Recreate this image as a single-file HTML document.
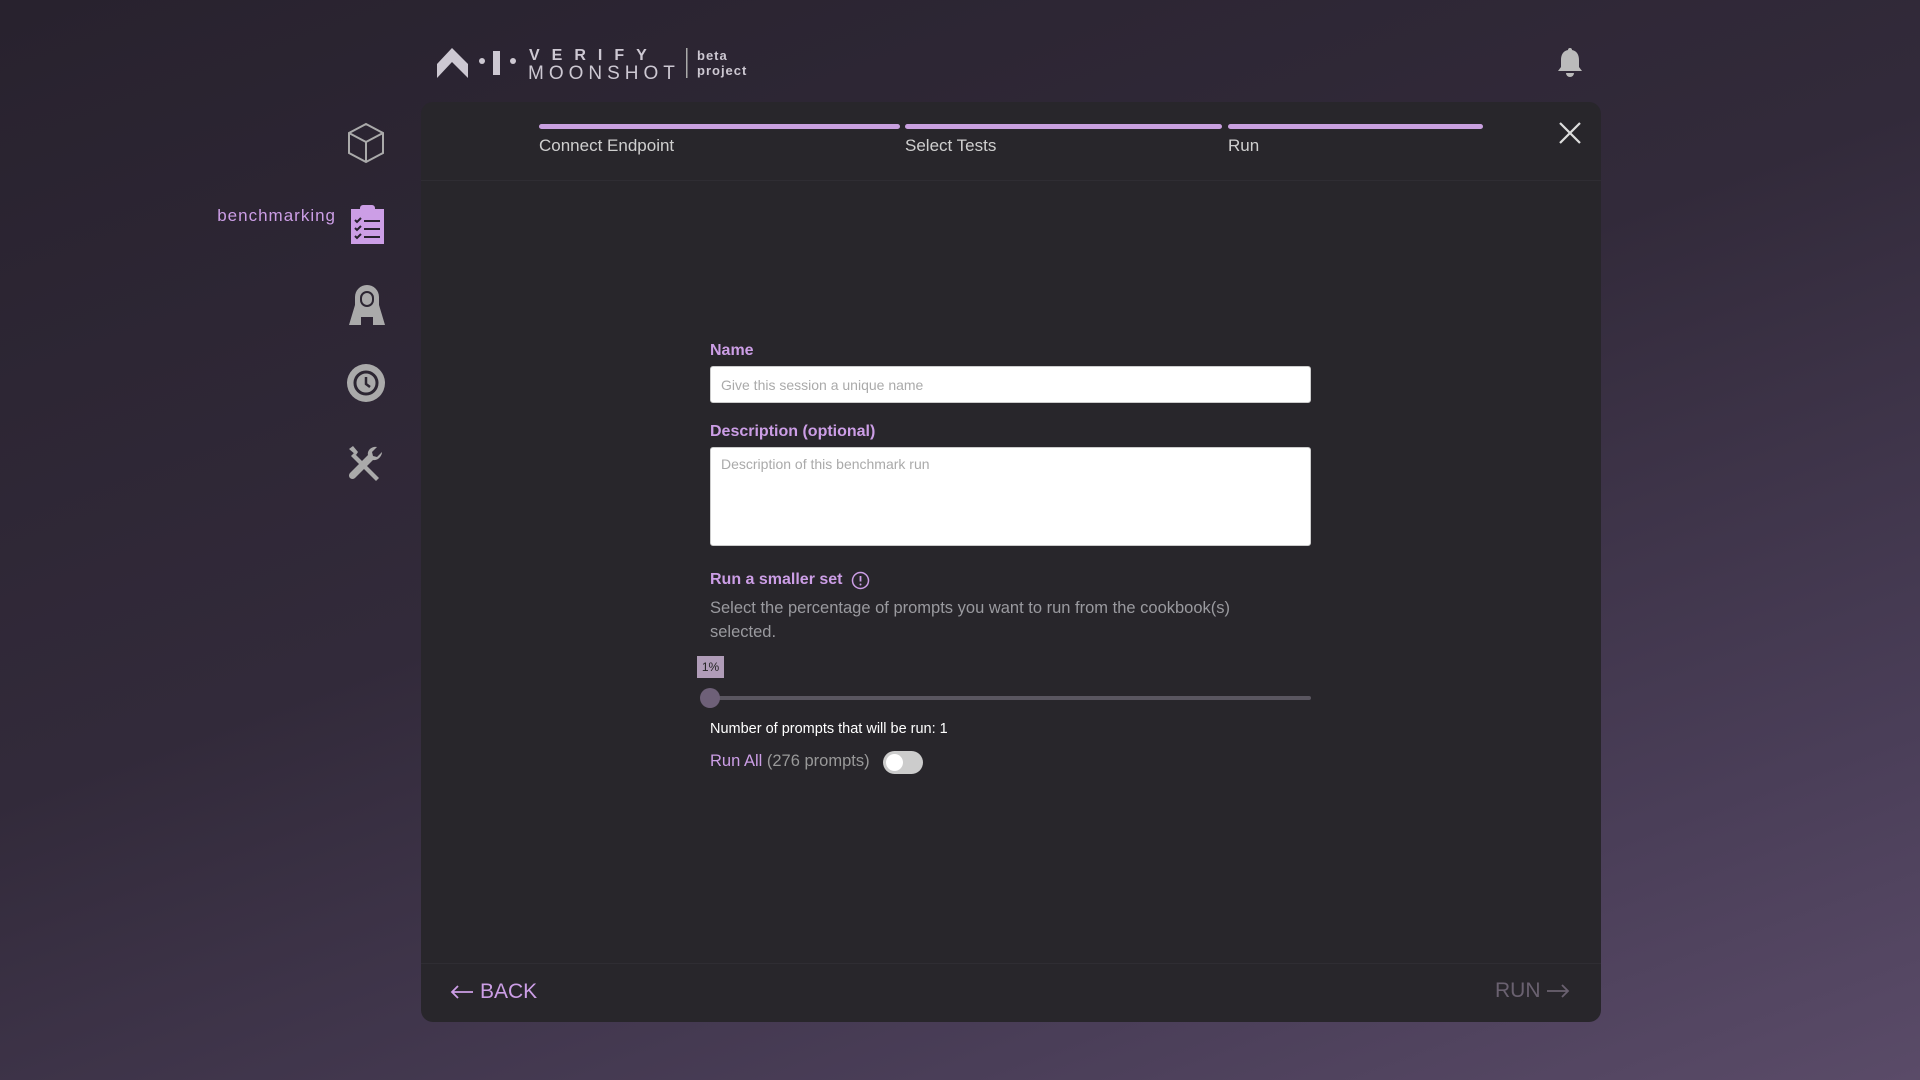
<!DOCTYPE html>
<html><head><meta charset="utf-8"><style>
*{margin:0;padding:0;box-sizing:border-box}
body{width:1920px;height:1080px;overflow:hidden;font-family:"Liberation Sans",sans-serif;background:linear-gradient(160deg,#28222e 0%,#322a3a 45%,#4a3e58 80%,#5a4b68 100%);position:relative;color:#ccc}
.abs{position:absolute}
.panel{left:421px;top:102px;width:1180px;height:920px;background:#28262b;border-radius:12px}
.bar{top:124px;height:5px;background:#c9a0e0;border-radius:3px}
.step{top:136px;font-size:17px;color:#cfcfcf}
.lbl{font-size:16px;font-weight:bold;color:#cc9ee6}
.inp{background:#fff;border:1px solid #ccc;border-radius:3px;font-size:14px;color:#aaa;padding:10px}
</style></head><body>
<!-- logo -->
<svg class="abs" style="left:436px;top:44px" width="320" height="36" viewBox="0 0 320 36">
<path d="M1 34 L1 20 L16 4 L32 20 L32 34 L16 18 Z" fill="#cdc8d2"/>
<circle cx="46" cy="17" r="3" fill="#cdc8d2"/>
<rect x="57" y="7" width="7" height="24" fill="#cdc8d2"/>
<circle cx="77" cy="17" r="3" fill="#cdc8d2"/>
<text x="93" y="16" font-family="Liberation Sans" font-weight="bold" font-size="16" letter-spacing="12" fill="#cdc8d2">VERIFY</text>
<text x="92" y="35" font-family="Liberation Sans" font-size="19" letter-spacing="5" fill="#cdc8d2">MOONSHOT</text>
<rect x="250" y="4" width="1.5" height="30" fill="#aaa"/>
<text x="261" y="16" font-family="Liberation Sans" font-weight="bold" font-size="13" letter-spacing="1" fill="#cdc8d2">beta</text>
<text x="261" y="31" font-family="Liberation Sans" font-weight="bold" font-size="13" letter-spacing="1" fill="#cdc8d2">project</text>
</svg>
<!-- bell -->
<svg class="abs" style="left:1556px;top:46px" width="28" height="32" viewBox="0 0 28 32"><path d="M14 2c-1.5 0-2 1-2 2C7 5 5 9 5 14v7l-3 4h24l-3-4v-7c0-5-2-9-7-10 0-1-.5-2-2-2z" fill="#bbb"/><path d="M10 27a4 4 0 0 0 8 0z" fill="#bbb"/></svg>
<!-- sidebar -->
<svg class="abs" style="left:346px;top:122px" width="40" height="42" viewBox="0 0 40 42" fill="none" stroke="#aaa" stroke-width="2"><path d="M20 2 L37 11 L37 31 L20 40 L3 31 L3 11 Z M3 11 L20 20 L37 11 M20 20 L20 40"/></svg>
<div class="abs" style="right:1584px;top:206px;font-size:17px;color:#cc9ee6;letter-spacing:1px">benchmarking</div>
<svg class="abs" style="left:350px;top:204px" width="35" height="40" viewBox="0 0 35 40"><rect x="1" y="5" width="33" height="35" fill="#cc9ee6"/><rect x="10" y="1" width="15" height="8" rx="3" fill="#cc9ee6"/><g stroke="#28222e" stroke-width="2" fill="none"><path d="M5 16l2 2 4-4M5 24l2 2 4-4M5 32l2 2 4-4M14 17h16M14 25h16M14 33h16"/></g></svg>
<svg class="abs" style="left:347px;top:284px" width="40" height="42" viewBox="0 0 40 42"><path d="M20 1a12 12 0 0 0-12 12v8L2 41h12v-8h12v8h12l-6-20v-8A12 12 0 0 0 20 1z" fill="#aaa"/><path d="M14 14a6 6 0 0 1 12 0v2a6 6 0 0 1-12 0z" fill="none" stroke="#2c2632" stroke-width="2"/></svg>
<svg class="abs" style="left:346px;top:363px" width="40" height="40" viewBox="0 0 40 40"><circle cx="20" cy="20" r="19" fill="#aaa"/><circle cx="20" cy="20" r="11" fill="none" stroke="#2c2632" stroke-width="3"/><path d="M20 14v7l4 3" stroke="#2c2632" stroke-width="2.5" fill="none"/></svg>
<svg class="abs" style="left:346px;top:444px" width="40" height="40" viewBox="0 0 40 40" fill="#aaa"><path d="M3 5l4-3 5 6 -2 3z"/><path d="M8 9l25 25-3 3L5 12z"/><path d="M36 8l-5 5-4-1-1-4 5-5c-5-1-10 3-9 8L4 29a3 3 0 0 0 5 5l18-18c5 1 9-4 9-8z"/></svg>
<!-- panel -->
<div class="abs panel"></div>
<div class="abs" style="left:421px;top:180px;width:1180px;height:1px;background:#2f2d33"></div>
<div class="abs bar" style="left:539px;width:361px"></div>
<div class="abs bar" style="left:905px;width:317px"></div>
<div class="abs bar" style="left:1228px;width:255px"></div>
<div class="abs step" style="left:539px">Connect Endpoint</div>
<div class="abs step" style="left:905px">Select Tests</div>
<div class="abs step" style="left:1228px">Run</div>
<svg class="abs" style="left:1559px;top:122px" width="22" height="22" viewBox="0 0 22 22" stroke="#ddd" stroke-width="2.2"><path d="M1 1L21 21M21 1L1 21"/></svg>
<!-- form -->
<div class="abs lbl" style="left:710px;top:342px">Name</div>
<div class="abs inp" style="left:710px;top:366px;width:601px;height:37px">Give this session a unique name</div>
<div class="abs lbl" style="left:710px;top:423px">Description (optional)</div>
<div class="abs inp" style="left:710px;top:447px;width:601px;height:99px;padding-top:8px">Description of this benchmark run</div>
<div class="abs lbl" style="left:710px;top:571px">Run a smaller set</div>
<svg class="abs" style="left:851px;top:571px" width="19" height="19" viewBox="0 0 19 19"><circle cx="9.5" cy="9.5" r="8" fill="none" stroke="#cc9ee6" stroke-width="1.5"/><path d="M9.5 5v5.5" stroke="#cc9ee6" stroke-width="1.8"/><circle cx="9.5" cy="13.5" r="1" fill="#cc9ee6"/></svg>
<div class="abs" style="left:710px;top:596px;width:560px;font-size:16.5px;line-height:24px;color:#9a9a9f">Select the percentage of prompts you want to run from the cookbook(s) selected.</div>
<div class="abs" style="left:697px;top:656px;width:27px;height:22px;background:#b09cb8;color:#222;font-size:12px;text-align:center;line-height:22px">1%</div>
<div class="abs" style="left:710px;top:696px;width:601px;height:4px;background:#5a5660;border-radius:2px"></div>
<div class="abs" style="left:700px;top:688px;width:20px;height:20px;border-radius:50%;background:#6e6078"></div>
<div class="abs" style="left:710px;top:721px;font-size:14.5px;color:#fff">Number of prompts that will be run: 1</div>
<div class="abs" style="left:710px;top:752px;font-size:16.5px;color:#cc9ee6">Run All <span style="color:#999">(276 prompts)</span></div>
<div class="abs" style="left:883px;top:751px;width:40px;height:23px;border-radius:12px;background:#ccc"></div>
<div class="abs" style="left:886px;top:754px;width:17px;height:17px;border-radius:50%;background:#fff"></div>
<!-- footer -->
<div class="abs" style="left:421px;top:963px;width:1180px;height:1px;background:#2f2d33"></div>
<svg class="abs" style="left:450px;top:984px" width="24" height="16" viewBox="0 0 24 16" stroke="#cc9ee6" stroke-width="1.8" fill="none"><path d="M23 8H2M8 2L2 8l6 6"/></svg>
<div class="abs" style="left:480px;top:980px;font-size:21px;color:#cc9ee6">BACK</div>
<div class="abs" style="left:1495px;top:979px;font-size:21px;color:#6a6170">RUN</div>
<svg class="abs" style="left:1546px;top:983px" width="24" height="16" viewBox="0 0 24 16" stroke="#6a6170" stroke-width="1.8" fill="none"><path d="M1 8h21M16 2l6 6-6 6"/></svg>
</body></html>
